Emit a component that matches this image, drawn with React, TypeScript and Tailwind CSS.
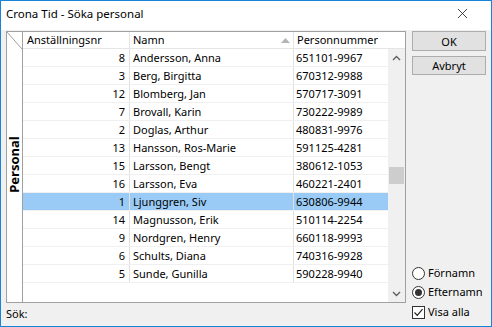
import { X } from "lucide-react"

const rows = [
  { nr: 8, name: "Andersson, Anna", pnr: "651101-9967" },
  { nr: 3, name: "Berg, Birgitta", pnr: "670312-9988" },
  { nr: 12, name: "Blomberg, Jan", pnr: "570717-3091" },
  { nr: 7, name: "Brovall, Karin", pnr: "730222-9989" },
  { nr: 2, name: "Doglas, Arthur", pnr: "480831-9976" },
  { nr: 13, name: "Hansson, Ros-Marie", pnr: "591125-4281" },
  { nr: 15, name: "Larsson, Bengt", pnr: "380612-1053" },
  { nr: 16, name: "Larsson, Eva", pnr: "460221-2401" },
  { nr: 1, name: "Ljunggren, Siv", pnr: "630806-9944" },
  { nr: 14, name: "Magnusson, Erik", pnr: "510114-2254" },
  { nr: 9, name: "Nordgren, Henry", pnr: "660118-9993" },
  { nr: 6, name: "Schults, Diana", pnr: "740316-9928" },
  { nr: 5, name: "Sunde, Gunilla", pnr: "590228-9940" },
]

function Chevron({ up }: { up?: boolean }) {
  return (
    <svg width="9" height="6" viewBox="0 0 9 6" className="text-[#606060]">
      <path d={up ? "M1 5 L4.5 1.5 L8 5" : "M1 1 L4.5 4.5 L8 1"} fill="none" stroke="currentColor" strokeWidth="1.4" />
    </svg>
  )
}

export default function App() {
  const selected = 8

  return (
    <div
      className="w-[492px] h-[327px] border border-[#1883d7] bg-[#f0f0f0] flex flex-col text-[11px] text-black overflow-hidden"
      style={{ fontFamily: '"Noto Sans", "Open Sans", sans-serif' }}
    >
      {/* title bar */}
      <div className="h-[29px] bg-white flex items-center justify-between pl-[5px] pr-[20px] pb-[4px] shrink-0">
        <span className="text-[11.5px] leading-none">Crona Tid - Söka personal</span>
        <X className="w-[17px] h-[17px] text-[#111]" strokeWidth={1.1} />
      </div>

      <div className="flex flex-1 pt-[1px]">
        {/* left column */}
        <div className="flex flex-col pl-[5px]">
          <div className="w-[400px] h-[272px] border border-[#a0a0a0] flex bg-white">
            {/* group strip */}
            <div className="relative w-[16px] border-r border-[#a0a0a0] flex items-center justify-center">
              <svg className="absolute left-0 top-0" width="15" height="17" viewBox="0 0 15 17">
                <line x1="0" y1="0" x2="15" y2="17" stroke="#a0a0a0" strokeWidth="1" />
              </svg>
              <span className="-rotate-90 font-bold whitespace-nowrap text-[13px] leading-none mt-[-6px]">Personal</span>
            </div>

            {/* table */}
            <div className="flex flex-col w-[382px]">
              <div className="h-[17px] flex border-b border-[#e5e5e5] shrink-0 leading-[16px]">
                <div className="w-[107px] border-r border-[#e5e5e5] pl-[4px]">Anställningsnr</div>
                <div className="w-[164px] border-r border-[#e5e5e5] pl-[3px] flex justify-between items-center pr-[3px]">
                  <span>Namn</span>
                  <svg width="9" height="5" viewBox="0 0 9 5">
                    <path d="M0 5 L4.5 0 L9 5 Z" fill="#b4b4b4" />
                  </svg>
                </div>
                <div className="flex-1 pl-[3px]">Personnummer</div>
              </div>

              <div className="flex flex-1">
                <div className="w-[365px] flex flex-col">
                  {rows.map((r, i) => (
                    <div
                      key={r.nr}
                      className={`h-[18px] flex border-b border-[#f0f0f0] leading-[17px] ${i === selected ? "bg-[#99cbf6]" : ""}`}
                    >
                      <div className="w-[107px] border-r border-[#e0e0e0] text-right pr-[4px]">{r.nr}</div>
                      <div className="w-[164px] border-r border-[#e0e0e0] pl-[3px]">{r.name}</div>
                      <div className="flex-1 pl-[2px]">{r.pnr}</div>
                    </div>
                  ))}
                </div>

                {/* scrollbar */}
                <div className="w-[17px] bg-[#f0f0f0] flex flex-col items-center">
                  <div className="h-[17px] flex items-center justify-center">
                    <Chevron up />
                  </div>
                  <div className="h-[101px]" />
                  <div className="w-[15px] h-[17px] bg-[#cdcdcd]" />
                  <div className="flex-1" />
                  <div className="h-[17px] flex items-center justify-center">
                    <Chevron />
                  </div>
                </div>
              </div>
            </div>
          </div>
          <div className="flex-1 flex items-center">Sök:</div>
        </div>

        {/* right column */}
        <div className="flex flex-col flex-1 pl-[6px] pr-[4px] pb-[7px]">
          <button className="w-[74px] h-[20px] bg-[#e1e1e1] border border-[#adadad] leading-none">OK</button>
          <button className="mt-[5px] w-[74px] h-[19px] bg-[#e1e1e1] border border-[#adadad] leading-none">Avbryt</button>
          <div className="flex-1" />
          <div className="flex flex-col gap-[6px]">
            <label className="flex items-center gap-[3px] h-[13px]">
              <span className="w-[13px] h-[13px] rounded-full border border-[#333] bg-white" />
              <span>Förnamn</span>
            </label>
            <label className="flex items-center gap-[3px] h-[13px]">
              <span className="w-[13px] h-[13px] rounded-full border border-[#333] bg-white flex items-center justify-center">
                <span className="w-[7px] h-[7px] rounded-full bg-[#333]" />
              </span>
              <span>Efternamn</span>
            </label>
            <label className="flex items-center gap-[3px] h-[13px] mt-[1px]">
              <span className="w-[13px] h-[13px] border border-[#333] bg-white flex items-center justify-center">
                <svg width="11" height="11" viewBox="0 0 11 11">
                  <path d="M1.5 5.5 L4.3 8.3 L9.5 2.2" fill="none" stroke="#222" strokeWidth="1.2" />
                </svg>
              </span>
              <span>Visa alla</span>
            </label>
          </div>
        </div>
      </div>
    </div>
  )
}
